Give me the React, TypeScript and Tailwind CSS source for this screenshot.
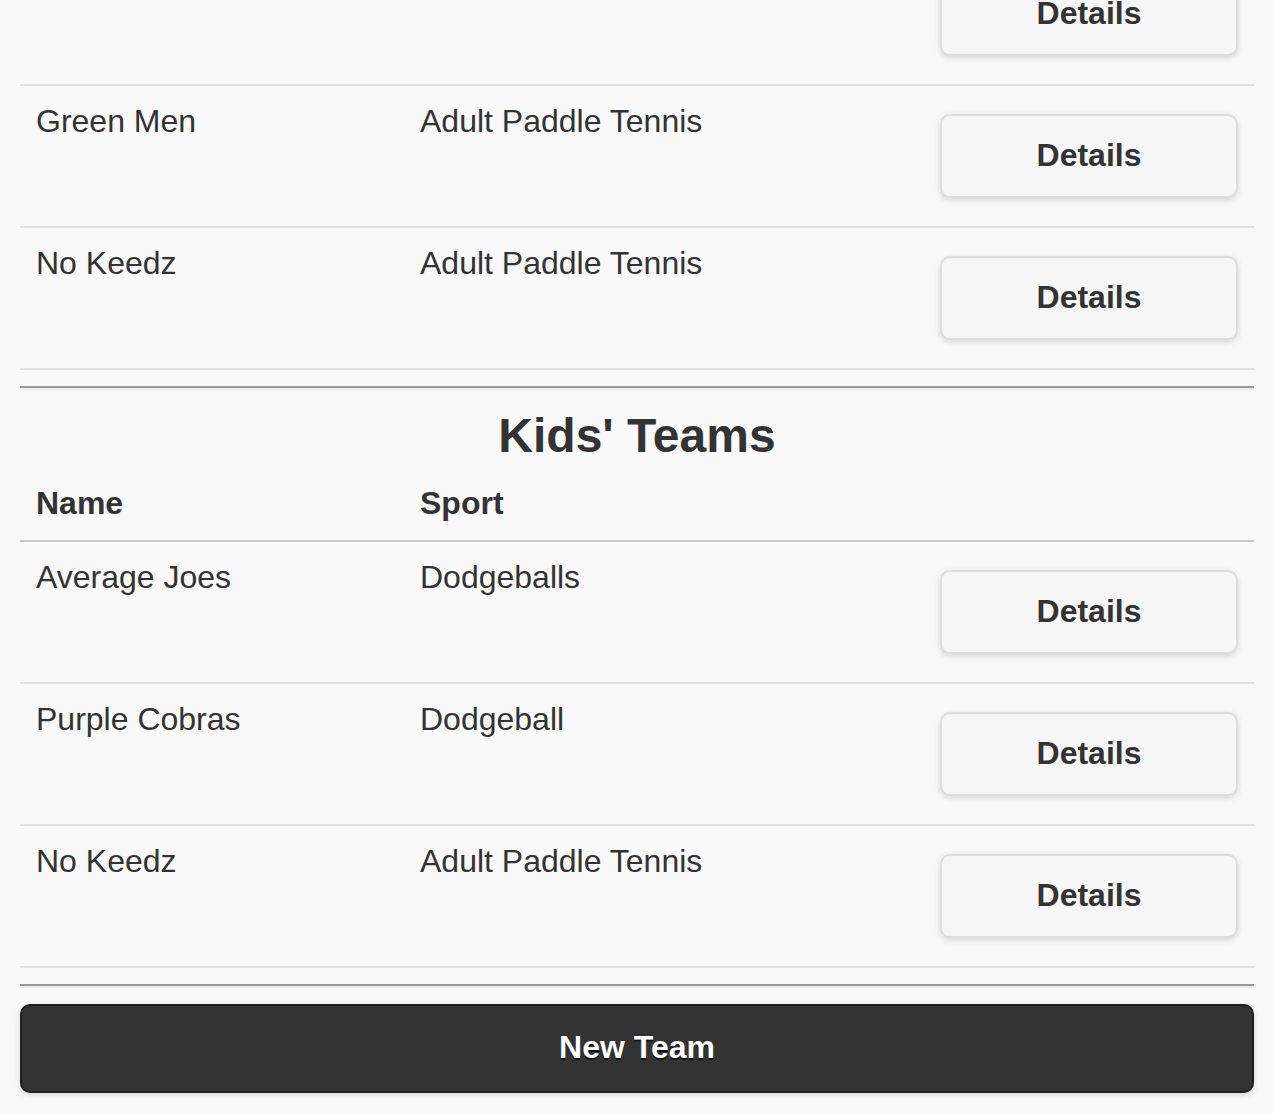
type Team = { name: string; sport: string };

const adultTeams: Team[] = [
  // first row is scrolled above the top edge; only its button shows
  { name: "", sport: "" },
  { name: "Green Men", sport: "Adult Paddle Tennis" },
  { name: "No Keedz", sport: "Adult Paddle Tennis" },
];

const kidsTeams: Team[] = [
  { name: "Average Joes", sport: "Dodgeballs" },
  { name: "Purple Cobras", sport: "Dodgeball" },
  { name: "No Keedz", sport: "Adult Paddle Tennis" },
];

const rowGrid = "grid grid-cols-[384px_520px_330px]";

function TeamRow({ team }: { team: Team }) {
  return (
    <div className={`${rowGrid} h-[142px] border-b-2 border-[#e0e0e0]`}>
      <div className="pl-[16px] pt-[15px] leading-[41.6px]">{team.name}</div>
      <div className="pl-[16px] pt-[15px] leading-[41.6px]">{team.sport}</div>
      <div className="px-[16px] pt-[28px]">
        <button
          type="button"
          className="w-full h-[84px] flex items-center justify-center bg-[#f6f6f6] border-2 border-[#dddddd] rounded-[10px] shadow-[0_2px_6px_rgba(0,0,0,0.15)] font-bold text-[32px] text-[#333333] pb-[2px]"
        >
          Details
        </button>
      </div>
    </div>
  );
}

function Divider() {
  return <div className="border-t-2 border-b-2 border-t-[#9a9a9a] border-b-[#ececec]" />;
}

export default function App() {
  return (
    <div
      className="min-h-screen bg-[#f9f9f9] text-[#333333] text-[32px] px-[20px] overflow-hidden"
      style={{ fontFamily: '"Liberation Sans", Arial, Helvetica, sans-serif' }}
    >
      <div className="-mt-[56px] pb-[20px]">
        <div>
          {adultTeams.map((t, i) => (
            <TeamRow key={i} team={t} />
          ))}
        </div>

        <div className="mt-[16px]">
          <Divider />
        </div>

        <h2 className="mt-[15px] mb-[2px] text-center font-bold text-[48px] leading-[62px]">
          Kids' Teams
        </h2>

        <div className={`${rowGrid} h-[73px] border-b-2 border-[#c8c8c8] font-bold`}>
          <div className="pl-[16px] pt-[14px] leading-[41.6px]">Name</div>
          <div className="pl-[16px] pt-[14px] leading-[41.6px]">Sport</div>
          <div />
        </div>

        <div>
          {kidsTeams.map((t, i) => (
            <TeamRow key={i} team={t} />
          ))}
        </div>

        <div className="mt-[16px]">
          <Divider />
        </div>

        <button
          type="button"
          className="mt-[16px] w-full h-[89px] flex items-center justify-center bg-[#333333] border-2 border-[#1f1f1f] rounded-[10px] shadow-[0_2px_6px_rgba(0,0,0,0.15)] text-white font-bold text-[32px] pb-[3px] [text-shadow:0_2px_0_#111111]"
        >
          New Team
        </button>
      </div>
    </div>
  );
}
